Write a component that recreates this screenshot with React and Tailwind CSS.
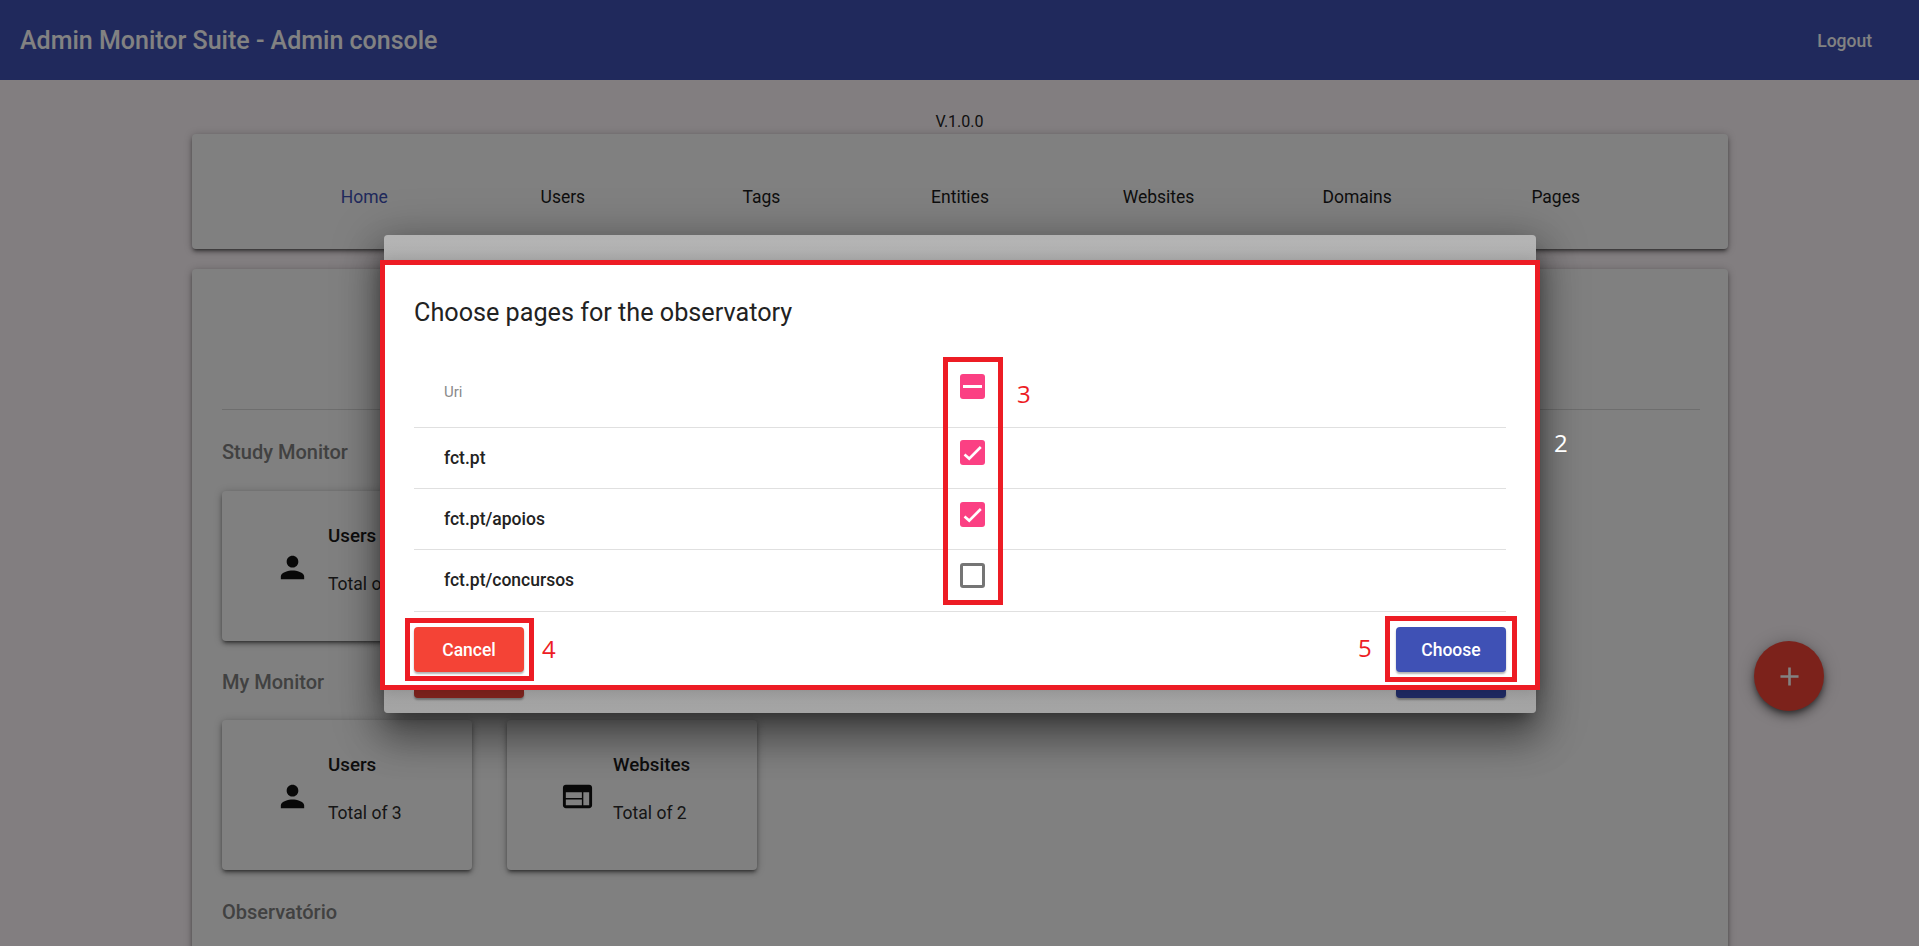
import React from 'react';

const TABS = ['Home', 'Users', 'Tags', 'Entities', 'Websites', 'Domains', 'Pages'];

const ROWS = [
  { uri: 'fct.pt', state: 'checked', height: 'h-[61px]', lift: 'mb-[11px]' },
  { uri: 'fct.pt/apoios', state: 'checked', height: 'h-[61px]', lift: 'mb-[10px]' },
  { uri: 'fct.pt/concursos', state: 'empty', height: 'h-[62px]', lift: 'mb-[11px]' },
];

function PersonIcon() {
  return (
    <svg viewBox="0 0 24 24" className="w-[35px] h-[35px] fill-[#111111] shrink-0">
      <path d="M12 12c2.21 0 4-1.79 4-4s-1.79-4-4-4-4 1.79-4 4 1.79 4 4 4zm0 2c-2.67 0-8 1.34-8 4v2h16v-2c0-2.66-5.33-4-8-4z" />
    </svg>
  );
}

function WebIcon() {
  return (
    <svg viewBox="0 0 24 24" className="w-[35px] h-[35px] fill-[#111111] shrink-0">
      <path d="M20 4H4c-1.1 0-1.99.9-1.99 2L2 18c0 1.1.9 2 2 2h16c1.1 0 2-.9 2-2V6c0-1.1-.9-2-2-2zm-5 14H4v-4h11v4zm0-5H4V9h11v4zm5 5h-4V9h4v9z" />
    </svg>
  );
}

function StatCard({ icon, title, total }) {
  return (
    <div className="w-[250px] h-[150px] bg-[#fbfbfb] rounded-[4px] shadow-[0_3px_3px_-2px_rgba(0,0,0,0.4),0_3px_4px_0_rgba(0,0,0,0.28),0_1px_8px_0_rgba(0,0,0,0.24)] flex items-start pl-[53px]">
      <div className="mt-[59px]">{icon}</div>
      <div className="ml-[18px] pt-[33px] leading-6">
        <div className="text-[18.75px] font-medium text-[#1c1c1c]">{title}</div>
        <div className="mt-[24px] text-[17.5px] text-[#2c2c2c]">Total of {total}</div>
      </div>
    </div>
  );
}

function Checkbox({ state }) {
  if (state === 'empty') {
    return <div className="w-[25px] h-[25px] rounded-[3px] border-[3px] border-[#757575] bg-white" />;
  }
  return (
    <div className="w-[25px] h-[25px] rounded-[3px] bg-[#fb4083] flex items-center justify-center">
      {state === 'mixed' ? (
        <div className="w-[19px] h-[3px] bg-white" />
      ) : (
        <svg viewBox="0 0 25 25" className="w-[25px] h-[25px] fill-none stroke-white stroke-[2.6]">
          <path d="M4.5 14.5L9.2 18.6L20.8 7" />
        </svg>
      )}
    </div>
  );
}

function Marker({ className, children }) {
  return (
    <span className={`absolute font-['Open_Sans',sans-serif] text-[24px] leading-8 ${className}`}>
      {children}
    </span>
  );
}

export default function App() {
  return (
    <div className="relative h-[946px] overflow-hidden bg-[#fff7fb] font-['Roboto',sans-serif] text-[#222222]">
      {/* page behind the dialog */}
      <header className="h-20 bg-[#3f51b5] flex items-center justify-between pt-[2px] pl-[20px] pr-[47px] text-white">
        <span className="text-[25px] font-medium">Admin Monitor Suite - Admin console</span>
        <span className="text-[17.5px] font-medium">Logout</span>
      </header>

      <div className="h-[54px] flex items-end justify-center pb-[2px] text-[16px] leading-5">V.1.0.0</div>

      <main className="ml-[192px] mr-[191px]">
        <nav className="h-[115px] bg-[#fbfbfb] rounded-[4px] shadow-[0_3px_3px_-2px_rgba(0,0,0,0.4),0_3px_4px_0_rgba(0,0,0,0.28),0_1px_8px_0_rgba(0,0,0,0.24)] px-[73px] pt-[51px] grid grid-cols-7 text-[17.5px] leading-6">
          {TABS.map((tab, i) => (
            <div key={tab} className={`text-center ${i === 0 ? 'text-[#3f51b5]' : 'text-[#1c1c1c]'}`}>
              {tab}
            </div>
          ))}
        </nav>

        <section className="mt-[20px] h-[800px] bg-[#fbfbfb] rounded-[4px] shadow-[0_3px_3px_-2px_rgba(0,0,0,0.4),0_3px_4px_0_rgba(0,0,0,0.28),0_1px_8px_0_rgba(0,0,0,0.24)] pl-[30px] pr-[28px] pt-[140px]">
          <div className="h-px bg-[#d8d8d8]" />
          <h2 className="mt-[30px] text-[20px] leading-6 font-medium text-[#808080]">Study Monitor</h2>
          <div className="mt-[27px]">
            <StatCard icon={<PersonIcon />} title="Users" total="3" />
          </div>
          <h2 className="mt-[29px] text-[20px] leading-6 font-medium text-[#808080]">My Monitor</h2>
          <div className="mt-[26px] flex gap-[35px]">
            <StatCard icon={<PersonIcon />} title="Users" total="3" />
            <StatCard icon={<WebIcon />} title="Websites" total="2" />
          </div>
          <h2 className="mt-[30px] text-[20px] leading-6 font-medium text-[#808080]">Observatório</h2>
        </section>
      </main>

      <button className="absolute left-[1754px] top-[641px] w-[70px] h-[70px] rounded-full bg-[#f44336] shadow-[0_3px_5px_-1px_rgba(0,0,0,0.4),0_6px_10px_0_rgba(0,0,0,0.28),0_1px_18px_0_rgba(0,0,0,0.24)] flex items-center justify-center">
        <svg viewBox="0 0 24 24" className="w-[31px] h-[31px] fill-white">
          <path d="M19 13h-6v6h-2v-6H5v-2h6V5h2v6h6v2z" />
        </svg>
      </button>

      {/* backdrop */}
      <div className="absolute inset-0 bg-black/[0.49]" />

      {/* dialog */}
      <div className="absolute left-[384px] top-[235px] w-[1152px] h-[478px] rounded-[4px] bg-gradient-to-b from-[#b4b4b4] to-[#a4a4a4] shadow-[0_11px_15px_-7px_rgba(0,0,0,0.35),0_24px_38px_3px_rgba(0,0,0,0.3),0_9px_46px_8px_rgba(0,0,0,0.26)]">
        <div className="relative mt-[25px] -mx-[4px] h-[430px] border-[5px] border-[#ed1c24] bg-white px-[29px] shadow-[0_0_16px_rgba(0,0,0,0.18)]">
          <h1 className="h-[94px] pt-[32px] text-[25.2px] leading-8 text-[#222222]">Choose pages for the observatory</h1>

          <div className="h-[69px] border-b border-[#e0e0e0] flex items-center">
            <div className="w-[546px] pl-[30px] pb-[2px] text-[15px] text-[#8a8a8a]">Uri</div>
            <div className="mb-[13px]">
              <Checkbox state="mixed" />
            </div>
          </div>
          {ROWS.map(row => (
            <div key={row.uri} className={`${row.height} border-b border-[#e0e0e0] flex items-center`}>
              <div className="w-[546px] pl-[30px] text-[17.5px] font-medium text-[#222222]">{row.uri}</div>
              <div className={row.lift}>
                <Checkbox state={row.state} />
              </div>
            </div>
          ))}

          <div className="mt-[15px] flex justify-between text-[17.5px] font-medium text-white">
            <div className="relative">
              <button className="w-[110px] h-[45px] pt-[2px] rounded-[4px] bg-[#f44336] shadow-[0_2px_2px_rgba(0,0,0,0.3)]">Cancel</button>
              <div className="absolute -left-[9px] -top-[9px] w-[129px] h-[63px] border-[5px] border-[#ed1c24]" />
              <Marker className="left-[128px] top-[6px] text-[#ed1c24]">4</Marker>
            </div>
            <div className="relative">
              <button className="w-[110px] h-[45px] pt-[2px] rounded-[4px] bg-[#3f51b5] shadow-[0_2px_2px_rgba(0,0,0,0.3)]">Choose</button>
              <div className="absolute -left-[11px] -top-[11px] w-[132px] h-[66px] border-[5px] border-[#ed1c24]" />
              <Marker className="-left-[38px] top-[5px] text-[#ed1c24]">5</Marker>
            </div>
          </div>

          {/* annotation round the checkbox column */}
          <div className="absolute left-[558px] top-[92px] w-[60px] h-[248px] border-[5px] border-[#ed1c24]" />
          <Marker className="left-[632px] top-[113px] text-[#ed1c24]">3</Marker>
        </div>

        <div className="flex justify-between px-[30px]">
          <div className="w-[110px] h-[8px] rounded-b-[4px] bg-[#7f231d] shadow-[0_2px_2px_rgba(0,0,0,0.3)]" />
          <div className="w-[110px] h-[8px] rounded-b-[4px] bg-[#1f2a64] shadow-[0_2px_2px_rgba(0,0,0,0.3)]" />
        </div>

        <Marker className="left-[1170px] top-[192px] text-white">2</Marker>
      </div>
    </div>
  );
}
